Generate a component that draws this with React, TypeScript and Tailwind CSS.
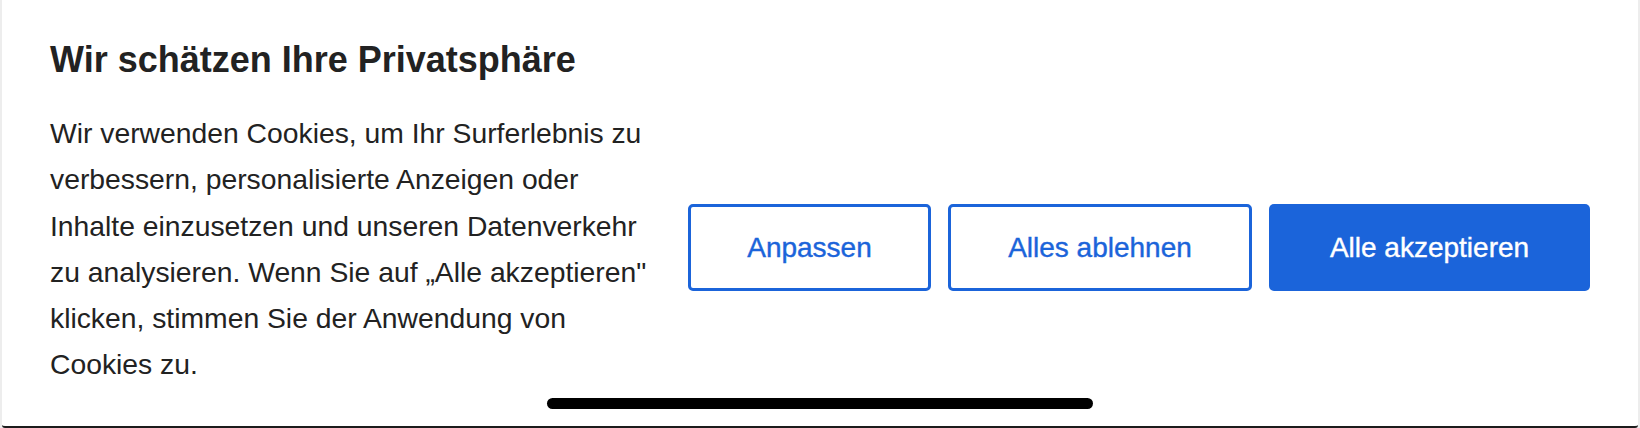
import React from 'react';

// Cookie consent banner (German), bottom sheet style
const buttons = [
  { label: 'Anpassen', width: 'w-[243px]', primary: false },
  { label: 'Alles ablehnen', width: 'w-[304px]', primary: false },
  { label: 'Alle akzeptieren', width: 'w-[321px]', primary: true },
];

export default function App() {
  return (
    <div className="w-[1640px] h-[428px] bg-[#ededed] px-[2px] font-['Liberation_Sans',Arial,sans-serif] text-[#222222]">
      <div className="relative h-full bg-white border-b-2 border-[#1c1c1c] rounded-bl-[3px] rounded-br-[3px] flex">
        <div className="w-[640px] pl-[48px] pt-[38px] shrink-0">
          <h2 className="text-[36px] leading-[43px] font-bold">Wir schätzen Ihre Privatsphäre</h2>
          <p className="mt-[29px] w-[605px] text-[28.3px] leading-[46.3px]">
            Wir verwenden Cookies, um Ihr Surferlebnis zu verbessern, personalisierte Anzeigen oder
            Inhalte einzusetzen und unseren Datenverkehr zu analysieren. Wenn Sie auf „Alle akzeptieren"
            klicken, stimmen Sie der Anwendung von Cookies zu.
          </p>
        </div>
        <div className="flex gap-[17px] ml-[46px] mt-[204px]">
          {buttons.map((b) => (
            <button
              key={b.label}
              className={
                b.primary
                  ? `${b.width} h-[87px] rounded-[5px] bg-[#1b64da] text-white text-[28px] [-webkit-text-stroke:0.4px_#ffffff]`
                  : `${b.width} h-[87px] rounded-[5px] border-[3px] border-[#1b64da] bg-white text-[#1b64da] text-[28px] [-webkit-text-stroke:0.4px_#1b64da]`
              }
            >
              {b.label}
            </button>
          ))}
        </div>
        <div className="absolute left-[545px] bottom-[17px] w-[546px] h-[11px] rounded-full bg-black" />
      </div>
    </div>
  );
}
